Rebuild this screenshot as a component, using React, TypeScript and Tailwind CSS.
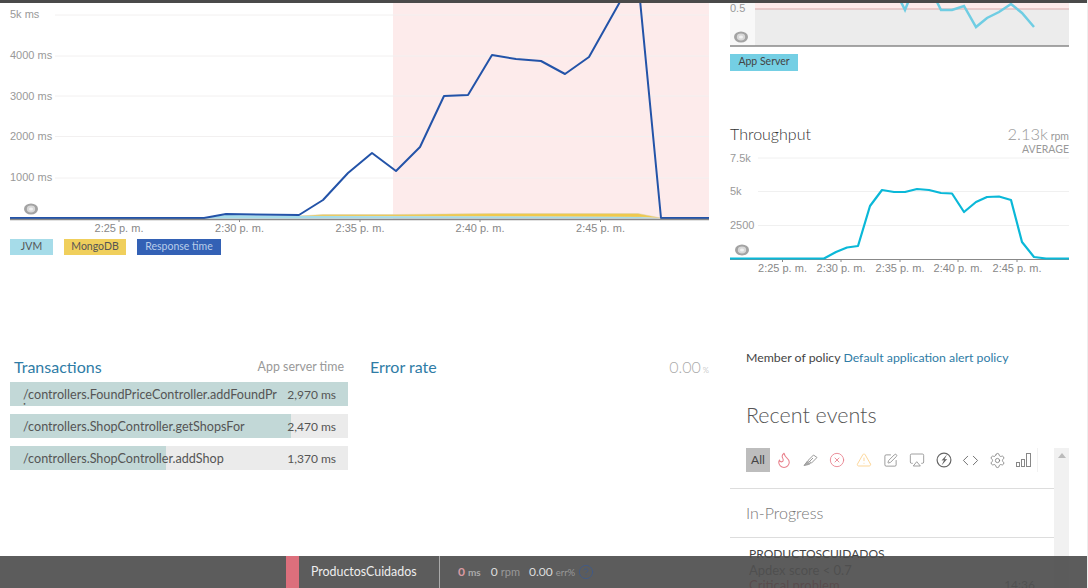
import { Code, Flame, CircleX, Settings, SquarePen, TriangleAlert, Airplay, CircleHelp } from "lucide-react";

const responseLine =
  "10,218 204,218 226,214 299,215 323,200 348,173 372,153 396,171 420,147 444,96 468,95 492,55 516,59 541,61 565,74 589,57 621,0 640,0 661,218 709,218";
const jvmArea = "10,218 204,218 226,215 299,216 323,216 500,216.5 640,217 661,218.5 661,218.5 10,218.5";
const mongoArea = "299,216 323,214.5 396,214.5 492,213.5 638,213.5 661,218 640,217 500,216.5 323,216";
const appServerLine =
  "900,0 905,10 909,0 936,0 941,10 952,10 964,6 976,27 987,18 999,12 1011,4 1022,13 1034,27";
const throughputLine =
  "730,258.5 824,258.5 836,252 847,247.5 858,246 870,206 882,190 894,192 905,192 917,189 929,190 941,193 952,193.5 964,212 976,202 987,197 999,196.5 1011,200 1022,242 1034,257 1046,258.5 1069,258.5";

const transactions = [
  { name: "/controllers.FoundPriceController.addFoundPrice", time: "2,970 ms", bar: "w-full" },
  { name: "/controllers.ShopController.getShopsFor", time: "2,470 ms", bar: "w-[281px]" },
  { name: "/controllers.ShopController.addShop", time: "1,370 ms", bar: "w-[156px]" },
];

// the little grey "eye" that sits at the bottom left of each chart
function Eye({ x, y }: { x: number; y: number }) {
  return (
    <g>
      <ellipse cx={x} cy={y} rx="7" ry="5.5" fill="#a3a3a3" />
      <ellipse cx={x} cy={y} rx="4.2" ry="3.4" fill="#d8d8d8" />
      <ellipse cx={x} cy={y} rx="2" ry="1.6" fill="#f2f2f2" />
    </g>
  );
}

function Marker() {
  return (
    <svg width="16" height="14" viewBox="0 0 16 14" fill="none" stroke="#999" strokeWidth="1">
      <path d="M5 7.5 L10.5 2 L14 4.5 L8.5 10 Z" />
      <path d="M4.5 8 L3 10 L1 12.5 L5.5 11.5 L7.5 10.5" fill="#aaa" />
      <path d="M6 9 L10 5" />
    </svg>
  );
}

function BoltCircle() {
  return (
    <svg width="16" height="16" viewBox="0 0 16 16" fill="none" stroke="#666" strokeWidth="1.2">
      <circle cx="8" cy="8" r="6.9" />
      <path d="M11 2.5 L5.5 8.4 L8 8.2 L5.5 13.5 L11.2 7 L8.6 7.2 Z" fill="#666" stroke="none" />
    </svg>
  );
}

function Bars() {
  return (
    <svg width="15" height="14" viewBox="0 0 15 14" fill="none" stroke="#888" strokeWidth="1">
      <rect x="0.5" y="9.5" width="3" height="4" />
      <rect x="5.5" y="6.5" width="3" height="7" />
      <rect x="10.5" y="0.5" width="4" height="13" />
    </svg>
  );
}

const eventIcons = [
  <Flame size={18} color="#e8808c" strokeWidth={1.4} />,
  <Marker />,
  <CircleX size={16} color="#e8808c" strokeWidth={1.3} />,
  <TriangleAlert size={16} color="#fbcf8a" strokeWidth={1.3} />,
  <SquarePen size={15} color="#888" strokeWidth={1.3} />,
  <Airplay size={16} color="#888" strokeWidth={1.2} />,
  <BoltCircle />,
  <Code size={17} color="#666" strokeWidth={1.3} />,
  <Settings size={17} color="#777" strokeWidth={1.1} />,
  <Bars />,
];

export default function App() {
  return (
    <div className="relative w-[1088px] h-[588px] overflow-hidden border-r border-[#eee] bg-white text-[#555] font-[family-name:Lato,sans-serif]">
      <div className="h-[3px] w-full bg-[#4a4a4a]" />

      <div className="flex">
        {/* left column */}
        <div className="w-[730px] shrink-0">
          <svg
            width="720"
            height="232"
            viewBox="0 3 720 232"
            className="block font-[family-name:'Liberation_Sans',sans-serif] text-[11px]"
          >
            <rect x="393" y="0" width="316" height="219" fill="#fdebeb" />
            {[15, 56, 96, 136.5, 178].map((y) => (
              <line key={y} x1="55" x2="709" y1={y} y2={y} stroke="#f2f0f0" strokeWidth="1" />
            ))}
            <text x="10" y="18" fill="#999">5k ms</text>
            <text x="10" y="59" fill="#999">4000 ms</text>
            <text x="10" y="100" fill="#999">3000 ms</text>
            <text x="10" y="140" fill="#999">2000 ms</text>
            <text x="10" y="181" fill="#999">1000 ms</text>

            <polygon points={mongoArea} fill="#efc94c" stroke="#d9d0b0" strokeWidth="0.5" />
            <polygon points={jvmArea} fill="#a6dce9" />
            <polyline points={responseLine} fill="none" stroke="#2353a8" strokeWidth="2" strokeLinejoin="round" />
            <line x1="10" x2="709" y1="219.5" y2="219.5" stroke="#888" strokeWidth="1.5" />

            {[
              [119, "2:25 p. m."],
              [239.5, "2:30 p. m."],
              [360, "2:35 p. m."],
              [480, "2:40 p. m."],
              [600.5, "2:45 p. m."],
            ].map(([x, label]) => (
              <g key={label}>
                <line x1={x} x2={x} y1="220" y2="222" stroke="#888" />
                <text x={x} y="232" textAnchor="middle" fill="#888">{label}</text>
              </g>
            ))}
            <Eye x={31} y={209} />
          </svg>

          <div className="mt-[4px] flex gap-[11px] pl-[10px] text-[10.5px] leading-[15px]">
            <span className="h-[16px] w-[43px] bg-[#a6dce9] text-center text-[#555]">JVM</span>
            <span className="h-[16px] w-[62px] bg-[#f0cf5c] text-center text-[#555]">MongoDB</span>
            <span className="h-[16px] w-[84px] bg-[#3361b5] text-center text-[#b9cdea]">Response time</span>
          </div>

          <div className="mt-[98px] flex">
            <div className="ml-[10px] w-[338px]">
              <div className="flex h-[29px] items-start justify-between pl-[4px] pr-[4px]">
                <h2 className="text-[16px] leading-[28px] text-[#2f7ca6]">Transactions</h2>
                <span className="text-[12.4px] leading-[28px] text-[#999]">App server time</span>
              </div>
              <div className="flex flex-col gap-[8px]">
                {transactions.map((t) => (
                  <div key={t.name} className="relative h-[24px] w-[338px] overflow-hidden bg-[#ebebeb]">
                    <div className={`h-full bg-[#c2d8d7] ${t.bar}`} />
                    <div className="absolute inset-0 flex justify-between pl-[13px] pr-[12px] pt-[6px] leading-[14px] text-[#555]">
                      <span className="w-[254px] break-all text-[12.6px]">{t.name}</span>
                      <span className="text-[12px]">{t.time}</span>
                    </div>
                  </div>
                ))}
              </div>
            </div>
            <div className="ml-[22px] flex h-[28px] w-[339px] items-center justify-between">
              <h2 className="text-[16px] text-[#2f7ca6]">Error rate</h2>
              <span className="text-[16px] font-light text-[#aaa]">
                0.00<span className="ml-[2px] text-[8px]">%</span>
              </span>
            </div>
          </div>
        </div>

        {/* right column */}
        <div className="w-[339px] shrink-0">
          <svg width="339" height="44" viewBox="730 3 339 44" className="block font-[family-name:'Liberation_Sans',sans-serif] text-[11px]">
            <rect x="730" y="0" width="25" height="47" fill="#f8f8f8" />
            <rect x="755" y="0" width="314" height="9" fill="#fdebeb" />
            <rect x="755" y="9" width="314" height="37" fill="#ececec" />
            <line x1="755" x2="1069" y1="9" y2="9" stroke="#d9a9a9" />
            <polyline points={appServerLine} fill="none" stroke="#6fcde3" strokeWidth="2.5" />
            <line x1="730" x2="1069" y1="46" y2="46" stroke="#888" strokeWidth="1.5" />
            <text x="730" y="12" fill="#999">0.5</text>
            <Eye x={741} y={37} />
          </svg>
          <div className="mt-[7px] h-[17px] w-[68px] bg-[#74cfe4] text-center text-[10.5px] leading-[15px] text-[#444]">App Server</div>

          <div className="mt-[53px] flex h-[20px] justify-between">
            <h2 className="text-[16px] leading-[20px] font-light text-[#333]">Throughput</h2>
            <span className="text-[10.5px] leading-[20px] text-[#999]">
              <span className="text-[16.5px] font-light">2.13k</span> rpm
            </span>
          </div>
          <div className="text-right text-[10.5px] leading-[10px] text-[#999]">AVERAGE</div>

          <svg width="339" height="122" viewBox="730 154 339 122" className="block overflow-visible font-[family-name:'Liberation_Sans',sans-serif] text-[11px]">
            {[158, 191.5, 225.5].map((y) => (
              <line key={y} x1="758" x2="1069" y1={y} y2={y} stroke="#f0f0f0" />
            ))}
            <text x="730" y="162" fill="#999">7.5k</text>
            <text x="730" y="195" fill="#999">5k</text>
            <text x="730" y="229" fill="#999">2500</text>
            <line x1="730" x2="1069" y1="259.5" y2="259.5" stroke="#888" />
            <polyline points={throughputLine} fill="none" stroke="#0ab8d8" strokeWidth="2.2" strokeLinejoin="round" />
            {[
              [782.5, "2:25 p. m."],
              [841, "2:30 p. m."],
              [900, "2:35 p. m."],
              [958, "2:40 p. m."],
              [1017, "2:45 p. m."],
            ].map(([x, label]) => (
              <g key={label}>
                <line x1={x} x2={x} y1="260" y2="262" stroke="#888" />
                <text x={x} y="272" textAnchor="middle" fill="#888">{label}</text>
              </g>
            ))}
            <Eye x={742} y={250} />
          </svg>

          <p className="mt-[74px] pl-[16px] text-[12.3px] leading-[16px] text-[#444]">
            Member of policy <span className="text-[#2f7ca6]">Default application alert policy</span>
          </p>
          <h2 className="mt-[36px] pl-[16px] text-[21.5px] leading-[26px] font-light text-[#555]">Recent events</h2>

          <div className="relative mt-[20px] w-[339px]">
            <div className="w-[324px]">
              <div className="flex h-[41px] items-start border-b border-[#ddd] pl-[16px]">
                <span className="flex h-[24px] w-[24px] items-center justify-center bg-[#bdbdbd] text-[12px] text-[#444]">All</span>
                <div className="ml-[1px] flex h-[24px] items-center border-r border-[#f2f2f2]">
                  {eventIcons.map((icon, i) => (
                    <span key={i} className="flex w-[26.6px] items-center justify-center">{icon}</span>
                  ))}
                </div>
              </div>
              <div className="flex h-[49px] items-center border-b border-[#ddd] pl-[16px] text-[16px] font-light text-[#777]">In-Progress</div>
              <div className="pl-[19px] pr-[19px] pt-[8px] text-[12px] leading-[16px]">
                <div className="text-[#444]">PRODUCTOSCUIDADOS</div>
                <div className="text-[13px] text-[#777]">Apdex score &lt; 0.7</div>
                <div className="-mt-px flex justify-between text-[13px] text-[#d05060]">
                  Critical problem <span className="text-[12px] text-[#888]">14:36</span>
                </div>
              </div>
            </div>
            <div className="absolute right-[0px] top-0 h-[140px] w-[15px] bg-[#f1f1f1]">
              <div className="mx-auto mt-[5px] h-0 w-0 border-x-[4px] border-b-[5px] border-x-transparent border-b-[#bbb]" />
            </div>
          </div>
        </div>
      </div>

      {/* status bar that floats over the page */}
      <div className="absolute bottom-0 left-0 flex h-[32px] w-full items-center bg-[#4a4a4a]/90 text-[12px]">
        <div className="ml-[286px] h-full w-[13px] bg-[#dc6f7c]" />
        <span className="w-[140px] pl-[12px] text-[12.4px] text-[#eee]">ProductosCuidados</span>
        <div className="h-full w-px bg-[#aaa]" />
        <div className="ml-[18px] flex items-baseline">
          <span className="font-bold text-[#d89aa3]">0</span>
          <span className="ml-[3px] text-[10px] font-bold text-[#aaa]">ms</span>
          <span className="ml-[10px] text-[#ddd]">0</span>
          <span className="ml-[3px] text-[11px] text-[#999]">rpm</span>
          <span className="ml-[9px] text-[#ddd]">0.00</span>
          <span className="ml-[3px] text-[9.5px] text-[#999]">err%</span>
        </div>
        <CircleHelp size={16} color="#3f5a8a" strokeWidth={1.3} className="ml-[3px]" />
      </div>
    </div>
  );
}
